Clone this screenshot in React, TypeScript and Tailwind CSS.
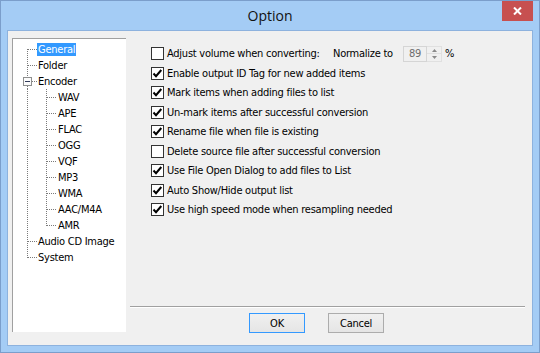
import React from "react";

type Node = { label: string; level: 0 | 1; kind?: "first" | "last" | "expander" | "lastChild" };

const nodes: Node[] = [
  { label: "General", level: 0, kind: "first" },
  { label: "Folder", level: 0 },
  { label: "Encoder", level: 0, kind: "expander" },
  { label: "WAV", level: 1 },
  { label: "APE", level: 1 },
  { label: "FLAC", level: 1 },
  { label: "OGG", level: 1 },
  { label: "VQF", level: 1 },
  { label: "MP3", level: 1 },
  { label: "WMA", level: 1 },
  { label: "AAC/M4A", level: 1 },
  { label: "AMR", level: 1, kind: "lastChild" },
  { label: "Audio CD Image", level: 0 },
  { label: "System", level: 0, kind: "last" },
];

const DOT = "#7a7a7a";

function Guides({ node }: { node: Node }) {
  if (node.level === 0) {
    return (
      <svg width="23" height="16" className="shrink-0">
        {node.kind === "expander" ? (
          <>
            <line x1="13.5" y1="0" x2="13.5" y2="4" stroke={DOT} strokeDasharray="1 1" />
            <line x1="13.5" y1="13" x2="13.5" y2="16" stroke={DOT} strokeDasharray="1 1" />
            <rect x="9.5" y="4.5" width="8" height="8" fill="#fbfbfb" stroke="#8e8f8f" />
            <line x1="11" y1="8.5" x2="16" y2="8.5" stroke="#333c5c" />
            <line x1="18" y1="8.5" x2="23" y2="8.5" stroke={DOT} strokeDasharray="1 1" />
          </>
        ) : (
          <>
            <line
              x1="13.5"
              y1={node.kind === "first" ? 8 : 0}
              x2="13.5"
              y2={node.kind === "last" ? 9 : 16}
              stroke={DOT}
              strokeDasharray="1 1"
            />
            <line x1="14" y1="8.5" x2="23" y2="8.5" stroke={DOT} strokeDasharray="1 1" />
          </>
        )}
      </svg>
    );
  }
  return (
    <svg width="43" height="16" className="shrink-0">
      <line x1="13.5" y1="0" x2="13.5" y2="16" stroke={DOT} strokeDasharray="1 1" />
      <line
        x1="32.5"
        y1="0"
        x2="32.5"
        y2={node.kind === "lastChild" ? 9 : 16}
        stroke={DOT}
        strokeDasharray="1 1"
      />
      <line x1="33" y1="8.5" x2="43" y2="8.5" stroke={DOT} strokeDasharray="1 1" />
    </svg>
  );
}

function Check({ checked }: { checked: boolean }) {
  return (
    <div className="w-[13px] h-[13px] border border-[#333333] bg-white shrink-0 flex">
      {checked && (
        <svg width="11" height="11" viewBox="0 0 11 11">
          <polyline
            points="1.5,5.5 4,8.2 9.3,2"
            fill="none"
            stroke="#000"
            strokeWidth="2"
          />
        </svg>
      )}
    </div>
  );
}

const options: { label: string; checked: boolean }[] = [
  { label: "Enable output ID Tag for new added items", checked: true },
  { label: "Mark items when adding files to list", checked: true },
  { label: "Un-mark items after successful conversion", checked: true },
  { label: "Rename file when file is existing", checked: true },
  { label: "Delete source file after successful conversion", checked: false },
  { label: "Use File Open Dialog to add files to List", checked: true },
  { label: "Auto Show/Hide output list", checked: true },
  { label: "Use high speed mode when resampling needed", checked: true },
];

export default function App() {
  return (
    <div className="w-[540px] h-[353px] bg-[#a4ccf5] border border-[#7b9ecb] flex flex-col font-['DejaVu_Sans_Condensed','DejaVu_Sans',sans-serif] text-[11px] leading-[13px] tracking-[-0.25px] text-black">
      {/* Title bar */}
      <div className="relative h-[29px] shrink-0 flex items-center justify-center">
        <span className="font-['Open_Sans',sans-serif] text-[14px] leading-[18px] tracking-normal text-[#111]">Option</span>
        <div className="absolute top-0 right-[6px] w-[31px] h-[20px] bg-[#c75050] flex items-center justify-center">
          <svg width="9" height="8" viewBox="0 0 9 8">
            <line x1="1" y1="0.5" x2="8" y2="7.5" stroke="#fff" strokeWidth="2" />
            <line x1="8" y1="0.5" x2="1" y2="7.5" stroke="#fff" strokeWidth="2" />
          </svg>
        </div>
      </div>

      {/* Client */}
      <div className="mx-[6px] h-[316px] shrink-0 border border-[#8db2de] bg-[#f0f0f0] flex">
        {/* Tree */}
        <div className="ml-[4px] mt-[7px] w-[114px] h-[294px] bg-white border-t border-l border-[#a0a0a0] pt-[2px] shrink-0">
          {nodes.map((n) => (
            <div key={n.label} className="flex items-center h-[16px]">
              <div className="shrink-0 w-[1px]" />
              <Guides node={n} />
              <span
                className={
                  "px-[1px] h-[13px] leading-[13px] whitespace-nowrap " +
                  (n.label === "General" ? "bg-[#3399ff] text-white" : "")
                }
              >
                {n.label}
              </span>
            </div>
          ))}
        </div>

        {/* Right column */}
        <div className="ml-[4px] w-[395px] flex flex-col">
          <div className="flex-1 pl-[21px] pt-[13px]">
            {/* Row 1 */}
            <div className="flex items-center h-[19.5px]">
              <Check checked={false} />
              <span className="ml-[3px] w-[166px] whitespace-nowrap">Adjust volume when converting:</span>
              <span className="w-[70px] whitespace-nowrap">Normalize to</span>
              <div className="w-[24px] h-[16px] border border-[#d5d5d5] bg-[#f0f0f0] text-[#6d6d6d] flex items-center justify-center">
                89
              </div>
              <div className="w-[15px] h-[16px] flex flex-col border border-[#e0e0e0] border-l-0">
                <div className="flex-1 flex items-center justify-center border-b border-[#e0e0e0]">
                  <svg width="5" height="3" viewBox="0 0 5 3">
                    <polygon points="0,3 5,3 2.5,0" fill="#8a8a8a" />
                  </svg>
                </div>
                <div className="flex-1 flex items-center justify-center">
                  <svg width="5" height="3" viewBox="0 0 5 3">
                    <polygon points="0,0 5,0 2.5,3" fill="#8a8a8a" />
                  </svg>
                </div>
              </div>
              <span className="ml-[3px]">%</span>
            </div>
            {options.map((o) => (
              <div key={o.label} className="flex items-center h-[19.5px]">
                <Check checked={o.checked} />
                <span className="ml-[3px] whitespace-nowrap">{o.label}</span>
              </div>
            ))}
          </div>

          {/* Separator */}
          <div className="h-[1px] bg-[#a0a0a0]" />
          <div className="h-[1px] bg-white" />

          {/* Buttons */}
          <div className="flex pl-[119px] gap-[23px] mt-[5px] mb-[12px]">
            <button className="w-[56px] h-[20px] border border-[#3399ff] bg-gradient-to-b from-[#f0f0f0] to-[#e5e5e5] text-[11px] leading-[13px]">
              OK
            </button>
            <button className="w-[56px] h-[20px] border border-[#acacac] bg-gradient-to-b from-[#f0f0f0] to-[#e5e5e5] text-[11px] leading-[13px]">
              Cancel
            </button>
          </div>
        </div>
      </div>
    </div>
  );
}
